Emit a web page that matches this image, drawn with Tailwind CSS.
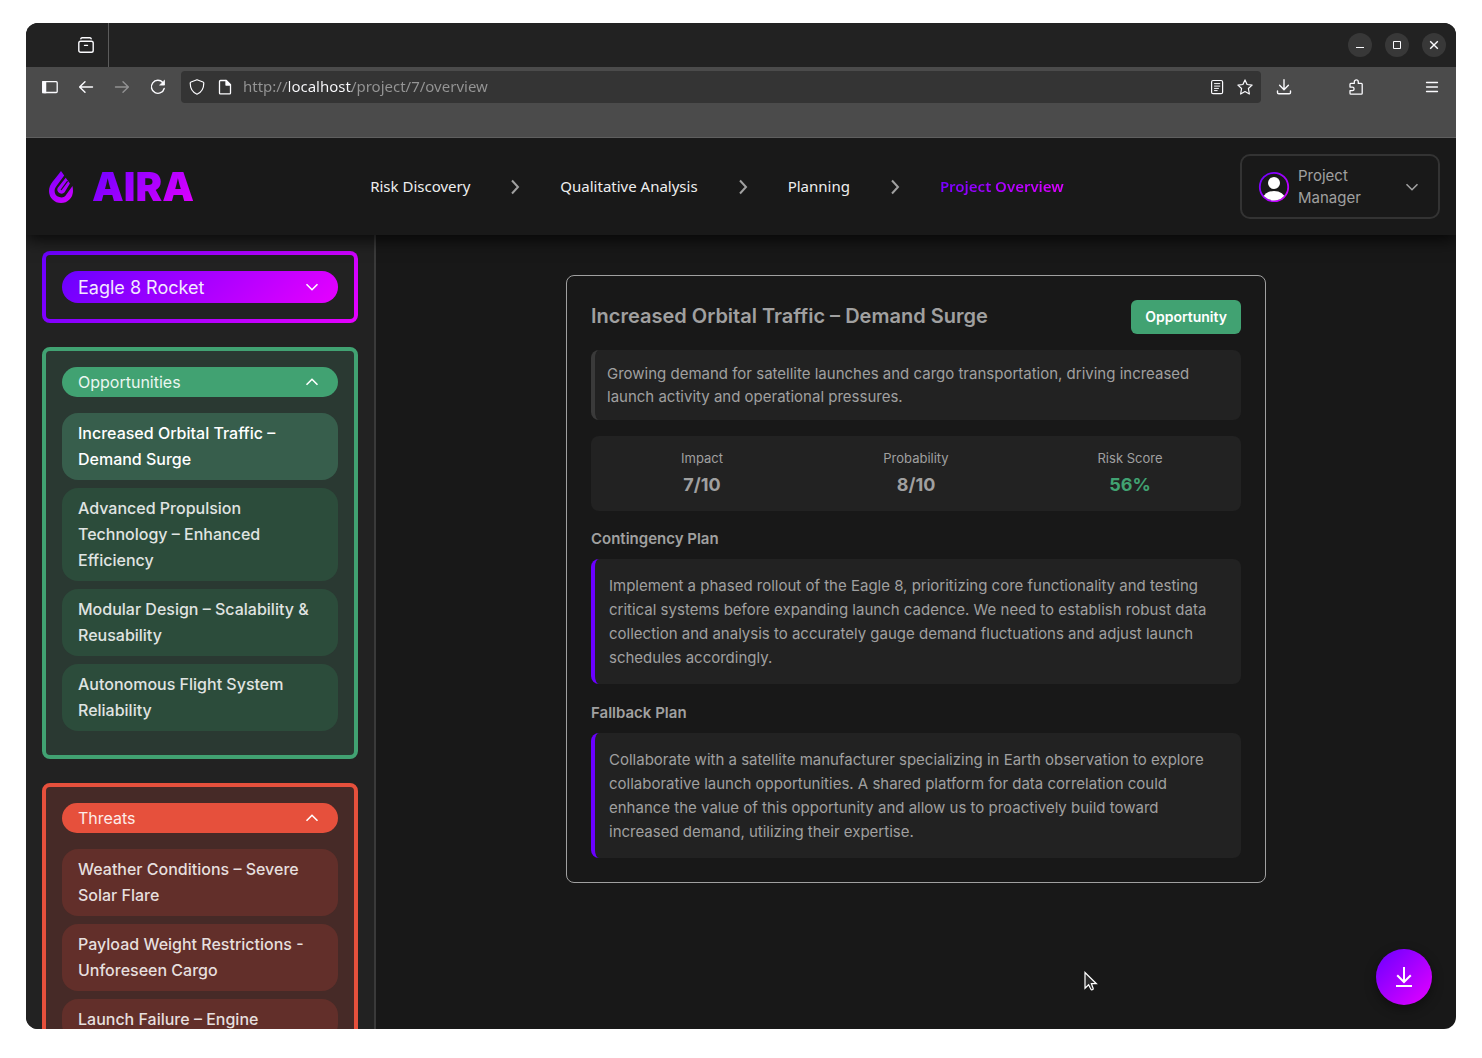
<!DOCTYPE html>
<html lang="en">
<head>
<meta charset="utf-8">
<meta name="viewport" content="width=device-width, initial-scale=1">
<title>AIRA – Project Overview</title>
<script src="https://cdn.jsdelivr.net/npm/@tailwindcss/browser@4"></script>
</head>
<body class="bg-white font-['Inter',sans-serif]">
<div class="relative flex h-screen flex-col px-[26px] pt-[23px] pb-[29px]">
<div class="relative flex min-h-0 flex-1 flex-col overflow-hidden rounded-xl bg-[#181818]">

  <!-- Window title bar -->
  <div class="relative z-20 flex h-11 shrink-0 items-center justify-between bg-[#222222] pr-[10px] text-[#fbfbfe]">
    <div class="flex h-full w-[83px] items-center justify-end border-r border-[#5b5b5b] pr-[14px]">
      <button type="button" aria-label="Recent browsing">
        <svg width="16" height="16" viewBox="0 0 16 16" fill="none" stroke="currentColor" stroke-width="1.4" stroke-linecap="round"><path d="M2.800 1.800c.2-.7.6-1 1.200-1h8c.6 0 1 .3 1.200 1"/><rect x=".8" y="4.2" width="14.4" height="11" rx="1.8"/><path d="M6.500 8.400h3"/></svg>
      </button>
    </div>
    <div class="flex gap-[13px]">
      <button type="button" aria-label="Minimize" class="grid size-6 place-items-center rounded-full bg-[#383838]"><svg width="16" height="16" viewBox="0 0 16 16" stroke="currentColor"><path d="M4 10.500h8"/></svg></button>
      <button type="button" aria-label="Maximize" class="grid size-6 place-items-center rounded-full bg-[#383838]"><svg width="16" height="16" viewBox="0 0 16 16" fill="none" stroke="currentColor"><path d="M4.500 4.500h7v7h-7z"/></svg></button>
      <button type="button" aria-label="Close" class="grid size-6 place-items-center rounded-full bg-[#383838]"><svg width="16" height="16" viewBox="0 0 16 16" stroke="currentColor" stroke-width="1.400"><path d="M4.200 4.200l7.600 7.600M11.800 4.200l-7.600 7.600"/></svg></button>
    </div>
  </div>

  <!-- Browser toolbar -->
  <div class="relative z-20 shrink-0 border-b border-[#5f5f5f] bg-[#4b4b4b] pb-[30px] text-[#fbfbfe]">
    <div class="flex h-10 items-center px-[6px]">
      <button type="button" aria-label="Sidebar" class="grid size-9 place-items-center"><svg width="16" height="16" viewBox="0 0 16 16" fill="none" stroke="currentColor" stroke-width="1.300"><rect x=".8" y="2.700" width="14.400" height="10.800" rx="1"/><path d="M.8 2.700h2.800v10.800H.8z" fill="currentColor"/></svg></button>
      <button type="button" aria-label="Back" class="grid size-9 place-items-center"><svg width="16" height="16" viewBox="0 0 16 16" fill="none" stroke="currentColor" stroke-width="1.400" stroke-linecap="round" stroke-linejoin="round"><path d="M14.500 8H1.700M7 2.700L1.600 8 7 13.300"/></svg></button>
      <button type="button" aria-label="Forward" disabled class="grid size-9 place-items-center text-[#929293]"><svg width="16" height="16" viewBox="0 0 16 16" fill="none" stroke="currentColor" stroke-width="1.400" stroke-linecap="round" stroke-linejoin="round"><path d="M1.500 8h12.800M9 2.700L14.400 8 9 13.300"/></svg></button>
      <button type="button" aria-label="Reload" class="grid size-9 place-items-center"><svg width="16" height="16" viewBox="0 0 16 16" fill="none" stroke="currentColor" stroke-width="1.400" stroke-linecap="round" stroke-linejoin="round"><path d="M14.200 9.500A6.500 6.500 0 1 1 12.800 3.500"/><path d="M14.500 1.600v4.500H10z" fill="currentColor" stroke-width=".8"/></svg></button>
      <div class="mr-[5px] ml-[5px] flex h-8 min-w-0 flex-1 items-center rounded bg-[#343434] px-2">
        <svg class="shrink-0" width="16" height="16" viewBox="0 0 16 16" fill="none" stroke="currentColor" stroke-width="1.200" stroke-linejoin="round"><path d="M8 .7l6 2.300c.5.200.8.600.8 1.100 0 5-2 9.200-6.800 11.200C3.200 13.300 1.200 9.100 1.200 4.100c0-.5.300-.9.800-1.100z"/></svg>
        <svg class="ml-3 shrink-0" width="16" height="16" viewBox="0 0 16 16" fill="none" stroke="currentColor" stroke-width="1.300" stroke-linejoin="round"><path d="M3.500 1.500h5.700L13.500 5.800v8.200c0 .5-.4.900-.9.900H3.400a.9.900 0 0 1-.9-.9V2.500c0-.6.400-1 1-1z"/><path d="M9 1.500v4.500h4.500z" fill="currentColor"/></svg>
        <input type="text" aria-label="Address" value="http://localhost/project/7/overview" class="mb-[2px] ml-[10px] h-[30px] min-w-0 flex-1 bg-[linear-gradient(90deg,#959595_0_46px,#fbfbfe_46px_109px,#959595_109px)] bg-clip-text font-['Noto_Sans',sans-serif] text-[15px] text-transparent outline-none">
        <button type="button" aria-label="Reader view"><svg width="16" height="16" viewBox="0 0 16 16" fill="none" stroke="currentColor" stroke-width="1.200" stroke-linecap="round"><rect x="2.600" y="1.500" width="11" height="13.200" rx="1.500"/><path d="M5.500 4.600h5.300M5.500 7.100h5.300M5.500 9.400h4M5.500 11.600h2.700" stroke-width="1"/></svg></button>
        <button type="button" aria-label="Bookmark" class="ml-3"><svg width="16" height="16" viewBox="0 0 16 16" fill="none" stroke="currentColor" stroke-width="1.200" stroke-linejoin="round"><path d="M8 .9l2.100 4.600 5 .6-3.700 3.400 1 5.500L8 12.500 3.600 15l1-5.500L.9 6.100l5-.6z"/></svg></button>
      </div>
      <button type="button" aria-label="Downloads" class="grid size-9 place-items-center"><svg width="16" height="16" viewBox="0 0 16 16" fill="none" stroke="currentColor" stroke-width="1.400" stroke-linecap="round" stroke-linejoin="round"><path d="M8 .8v9.500M3.600 6.300L8 10.700l4.400-4.400M1.500 12v1.500c0 .8.500 1.300 1.300 1.300h10.400c.8 0 1.300-.5 1.300-1.300V12"/></svg></button>
      <button type="button" aria-label="Extensions" class="ml-9 grid size-9 place-items-center"><svg width="16" height="16" viewBox="0 0 16 16" fill="none" stroke="currentColor" stroke-width="1.300" stroke-linejoin="round"><path d="M6.300 4.400V2.900a2 2 0 0 1 4 0v1.500h3c.5 0 .9.400.9.900v9c0 .5-.4.900-.9.900H2.900a.9.900 0 0 1-.9-.9v-2.600h2.300a1.800 1.800 0 0 0 0-3.600H2V5.300c0-.5.400-.9.900-.9z"/></svg></button>
      <button type="button" aria-label="Menu" class="ml-10 grid size-9 place-items-center"><svg width="16" height="16" viewBox="0 0 16 16" stroke="currentColor" stroke-width="1.300" stroke-linecap="round"><path d="M2.500 3.500h11M2.500 8h11M2.500 12.500h11"/></svg></button>
    </div>
  </div>

  <!-- Application header -->
  <header class="relative z-10 flex h-[97px] shrink-0 items-center justify-between bg-[#191919] px-4 shadow-[0_4px_16px_rgba(0,0,0,0.8)]">
    <a href="#" class="flex items-center gap-[19px] pl-[7px]">
      <svg width="24" height="32" viewBox="0 0 24 32" aria-hidden="true"><defs><linearGradient id="drop" x1="0" y1="0" x2="24" y2="32" gradientUnits="userSpaceOnUse"><stop stop-color="#7600ff"/><stop offset="1" stop-color="#d400ff"/></linearGradient></defs><path fill="url(#drop)" d="M12 0l3.200 4.600-7.900 10.600C6.100 16.900 5.600 18.200 5.600 20a6.400 6.400 0 0 0 11.900 3.200l6-8.100c.3 1.500.5 3.200.5 4.900a12 12 0 0 1-24 0C0 13 6 8.500 12 0z"/><path fill="url(#drop)" d="M16.700 6.800l4.200 5.700-5.300 8.700a4.200 4.200 0 0 1-7-4.300z"/><path fill="none" stroke="#191919" stroke-width="1.200" d="M18.600 10.200L12 19"/></svg>
      <span class="bg-[linear-gradient(135deg,#6a00ff,#e600ff)] bg-clip-text text-[40px] leading-12 font-black text-transparent">AIRA</span>
    </a>
    <nav aria-label="Steps" class="flex items-center gap-[33px] font-['Noto_Sans',sans-serif] text-[15px] leading-6 whitespace-nowrap text-[#eeeeee] [&>a]:pb-[2px]">
      <a href="#">Risk Discovery</a>
      <svg width="24" height="24" viewBox="0 0 24 24" fill="none" stroke="#a0a0a0" stroke-width="2"><path d="M9 5.500l6 6.500-6 6.500"/></svg>
      <a href="#">Qualitative Analysis</a>
      <svg width="24" height="24" viewBox="0 0 24 24" fill="none" stroke="#a0a0a0" stroke-width="2"><path d="M9 5.500l6 6.500-6 6.500"/></svg>
      <a href="#">Planning</a>
      <svg width="24" height="24" viewBox="0 0 24 24" fill="none" stroke="#a0a0a0" stroke-width="2"><path d="M9 5.500l6 6.500-6 6.500"/></svg>
      <a href="#" aria-current="page" class="bg-[linear-gradient(135deg,#6a00ff,#e600ff)] bg-clip-text font-semibold text-transparent">Project Overview</a>
    </nav>
    <button type="button" aria-haspopup="true" class="flex h-[65px] w-[200px] items-center gap-2 rounded-[10px] border-2 border-[#333333] px-4 text-left text-[15px] leading-[22px] text-[#a0a0a0]">
      <svg class="shrink-0" width="32" height="32" viewBox="0 0 32 32" aria-hidden="true"><defs><linearGradient id="ring" x1="0" y1="0" x2="1" y2="1"><stop stop-color="#6a00ff"/><stop offset="1" stop-color="#d800ff"/></linearGradient><clipPath id="face"><circle cx="16" cy="16" r="13.500"/></clipPath></defs><circle cx="16" cy="16" r="14.200" fill="#191919" stroke="url(#ring)" stroke-width="1.800"/><circle cx="16" cy="12" r="6" fill="#fff"/><ellipse cx="16" cy="27.500" rx="11" ry="7.500" fill="#fff" clip-path="url(#face)"/></svg>
      <span class="w-20">Project Manager</span>
      <svg class="ml-auto shrink-0" width="20" height="20" viewBox="0 0 20 20" fill="none" stroke="currentColor" stroke-width="1.600"><path d="M4.500 7.200L10 12.700l5.500-5.500"/></svg>
    </button>
  </header>

  <div class="flex min-h-0 flex-1">
    <!-- Sidebar -->
    <aside class="flex w-[350px] shrink-0 flex-col gap-6 overflow-hidden border-r-2 border-[#3a3a3a] bg-[#222222] p-4 text-white">
      <section class="shrink-0 rounded-lg bg-[linear-gradient(135deg,#6a00ff,#e600ff)] p-1">
        <div class="rounded bg-[#222222] p-4">
          <button type="button" aria-expanded="false" class="flex h-8 w-full items-center justify-between rounded-full bg-[linear-gradient(135deg,#6a00ff,#e600ff)] px-4 text-[18px] text-[#f3e8ff]">
            Eagle 8 Rocket
            <svg width="20" height="20" viewBox="0 0 20 20" fill="none" stroke="#fff" stroke-width="1.600"><path d="M4.500 7.200L10 12.700l5.500-5.500"/></svg>
          </button>
        </div>
      </section>

      <section class="shrink-0 rounded-lg border-4 border-[#41a272] bg-[#2a3932] p-4">
        <button type="button" aria-expanded="true" class="mb-4 flex h-[30px] w-full items-center justify-between rounded-full bg-[#41a272] px-4 text-[16px] text-[#eaf6f0]">
          Opportunities
          <svg width="20" height="20" viewBox="0 0 20 20" fill="none" stroke="#fff" stroke-width="1.600"><path d="M4.500 12.800L10 7.300l5.500 5.500"/></svg>
        </button>
        <ul class="text-[16px] leading-[26px] font-medium text-[#e0e4e2]">
          <li class="mb-2 rounded-2xl bg-[#375e4c] px-4 pt-[7px] pb-2 text-white"><a href="#">Increased Orbital Traffic – Demand Surge</a></li>
          <li class="mb-2 rounded-2xl bg-[#2c4c3b] px-4 pt-[7px] pb-2"><a href="#">Advanced Propulsion Technology – Enhanced Efficiency</a></li>
          <li class="mb-2 rounded-2xl bg-[#2c4c3b] px-4 pt-[7px] pb-2"><a href="#">Modular Design – Scalability &amp; Reusability</a></li>
          <li class="mb-2 rounded-2xl bg-[#2c4c3b] px-4 pt-[7px] pb-2"><a href="#">Autonomous Flight System Reliability</a></li>
        </ul>
      </section>

      <section class="shrink-0 rounded-lg border-4 border-[#e6503c] bg-[#462a27] p-4">
        <button type="button" aria-expanded="true" class="mb-4 flex h-[30px] w-full items-center justify-between rounded-full bg-[#e6503c] px-4 text-[16px] text-[#fdece9]">
          Threats
          <svg width="20" height="20" viewBox="0 0 20 20" fill="none" stroke="#fff" stroke-width="1.600"><path d="M4.500 12.800L10 7.300l5.500 5.500"/></svg>
        </button>
        <ul class="text-[16px] leading-[26px] font-medium text-[#e6dfde]">
          <li class="mb-2 rounded-2xl bg-[#622f2a] px-4 pt-[7px] pb-2"><a href="#">Weather Conditions – Severe Solar Flare</a></li>
          <li class="mb-2 rounded-2xl bg-[#622f2a] px-4 pt-[7px] pb-2"><a href="#">Payload Weight Restrictions - Unforeseen Cargo</a></li>
          <li class="mb-2 rounded-2xl bg-[#622f2a] px-4 pt-[7px] pb-2"><a href="#">Launch Failure – Engine</a></li>
        </ul>
      </section>
    </aside>

    <!-- Risk details -->
    <main class="min-w-0 flex-1 px-6 pt-10 text-[#a0a0a0]">
      <article class="mx-auto max-w-[700px] rounded-lg border border-[#a0a0a0] p-6">
        <div class="flex items-start justify-between">
          <h1 class="text-[20px] leading-8 font-semibold">Increased Orbital Traffic – Demand Surge</h1>
          <span class="rounded-md bg-[#41a272] px-[14px] py-[6px] text-[14px] leading-[22px] font-semibold text-white">Opportunity</span>
        </div>
        <p class="mt-4 rounded-lg border-l-4 border-[#3a3a3a] bg-[#222222] p-3 text-[15px] leading-[23px]">Growing demand for satellite launches and cargo transportation, driving increased launch activity and operational pressures.</p>
        <dl class="mt-4 grid grid-cols-3 rounded-lg bg-[#222222] px-1 py-3 text-center">
          <div><dt class="text-[13px] leading-5">Impact</dt><dd class="mt-[3px] text-[18px] leading-7 font-bold">7/10</dd></div>
          <div><dt class="text-[13px] leading-5">Probability</dt><dd class="mt-[3px] text-[18px] leading-7 font-bold">8/10</dd></div>
          <div><dt class="text-[13px] leading-5">Risk Score</dt><dd class="mt-[3px] text-[18px] leading-7 font-bold text-[#41a272]">56%</dd></div>
        </dl>
        <section class="pt-4">
          <h2 class="mb-2 text-[15px] leading-6 font-semibold">Contingency Plan</h2>
          <p class="rounded-lg border-l-4 border-[#6a00ff] bg-[#222222] px-[14px] pt-[15px] pb-[14px] text-[15px] leading-6">Implement a phased rollout of the Eagle 8, prioritizing core functionality and testing critical systems before expanding launch cadence. We need to establish robust data collection and analysis to accurately gauge demand fluctuations and adjust launch schedules accordingly.</p>
        </section>
        <section class="pt-[17px]">
          <h2 class="mb-2 text-[15px] leading-6 font-semibold">Fallback Plan</h2>
          <p class="rounded-lg border-l-4 border-[#6a00ff] bg-[#222222] px-[14px] pt-[15px] pb-[14px] text-[15px] leading-6">Collaborate with a satellite manufacturer specializing in Earth observation to explore collaborative launch opportunities. A shared platform for data correlation could enhance the value of this opportunity and allow us to proactively build toward increased demand, utilizing their expertise.</p>
        </section>
      </article>
    </main>
  </div>

  <!-- Floating download action -->
  <button type="button" aria-label="Download report" class="absolute right-6 bottom-6 grid size-14 place-items-center rounded-full bg-[linear-gradient(135deg,#6a00ff,#e600ff)] shadow-[0_4px_12px_rgba(0,0,0,0.4)]">
    <svg width="24" height="24" viewBox="0 0 24 24" fill="none" stroke="#fff" stroke-width="2"><path d="M12 2v15M5.200 10.200L12 17l6.800-6.800M4 21h16"/></svg>
  </button>

  <!-- Mouse pointer -->
  <svg class="absolute right-[358px] bottom-[37px]" width="14" height="21" viewBox="0 0 14 21" fill="#2b2b2b" stroke="#fff" stroke-width="1.200" aria-hidden="true"><path d="M1 1.500v15.800l3.600-3.500 2.300 4.500c.5 1 2.500.5 2.300-.8L7.400 12.700h5z"/></svg>
</div>
</div>
</body>
</html>
